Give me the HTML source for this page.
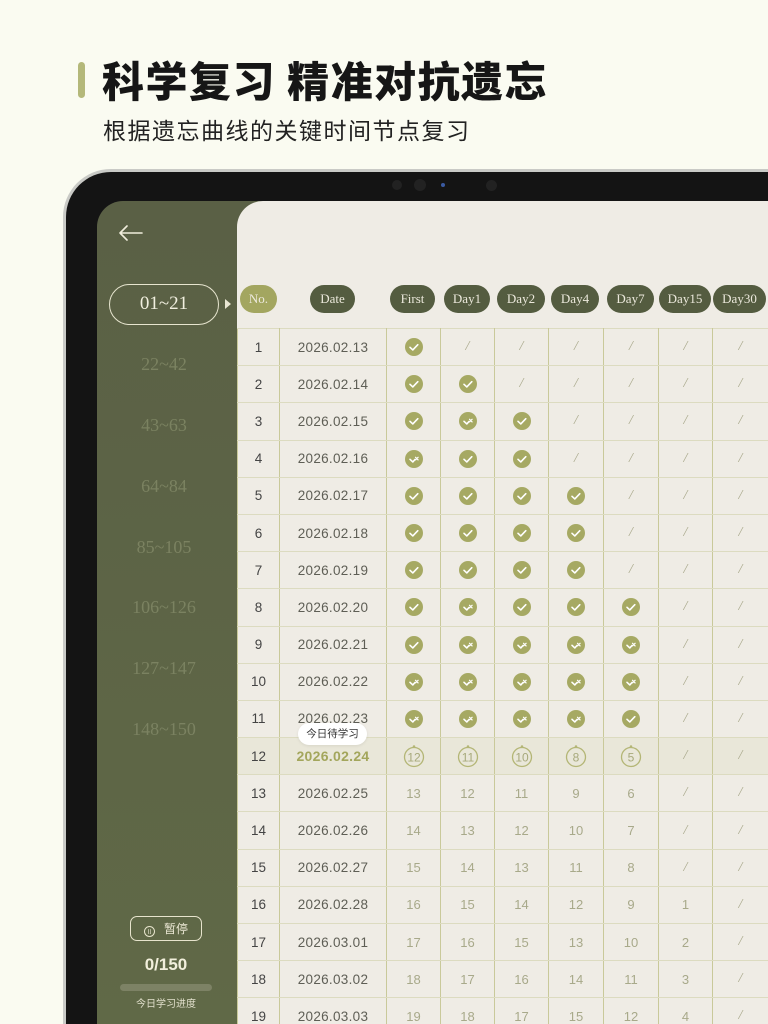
<!DOCTYPE html>
<html><head><meta charset="utf-8">
<style>
*{margin:0;padding:0;box-sizing:border-box}
html,body{width:768px;height:1024px;overflow:hidden}
body{background:#fafbf1;font-family:"Liberation Sans","Noto Sans CJK SC",sans-serif}
#w{position:relative;width:768px;height:1024px;overflow:hidden}
.bar{position:absolute;left:78px;top:62px;width:7px;height:36px;border-radius:4px;background:#b4b87a}
h1{position:absolute;left:102px;top:49px;font-size:42px;font-weight:900;color:#161616;letter-spacing:1.5px;font-family:"Noto Sans CJK SC",sans-serif;white-space:nowrap}
h2{position:absolute;left:103px;top:112px;font-size:23px;font-weight:400;color:#222;letter-spacing:1.5px;font-family:"Noto Sans CJK SC",sans-serif;white-space:nowrap}
.frame{position:absolute;left:63px;top:169px;width:705px;height:855px;border-radius:48px 0 0 0;background:#c9cac6;}
.bezel{position:absolute;left:66px;top:172px;width:702px;height:852px;border-radius:45px 0 0 0;background:#141414}
.cam{position:absolute;top:180px;width:10px;height:10px;border-radius:50%;background:#222}
.screen{position:absolute;left:97px;top:201px;width:671px;height:823px;border-radius:26px 0 0 0;overflow:hidden;background:linear-gradient(#5a6045,#606947)}
.back{position:absolute;left:118px;top:222px}
.pill{position:absolute;left:109px;top:284px;width:110px;height:41px;border:1.5px solid #e7e5cf;border-radius:21px;color:#f1efdf;font-family:"Liberation Serif",serif;font-size:19px;text-align:center;line-height:38px}
.tri{position:absolute;left:225px;top:299px;width:0;height:0;border-top:5px solid transparent;border-bottom:5px solid transparent;border-left:6px solid #e9e6d3}
.rng{position:absolute;left:97px;width:134px;text-align:center;color:#7b8261;font-family:"Liberation Serif",serif;font-size:18px}
.main{position:absolute;left:237px;top:201px;width:531px;height:823px;background:#efece5;border-radius:26px 0 0 0;overflow:hidden}
.hp{position:absolute;top:285px;height:28px;border-radius:14px;background:#545c40;color:#ece9dc;font-family:"Liberation Serif",serif;font-size:13px;line-height:28px;text-align:center}
.tw{position:absolute;left:237px;top:328px;width:531px;height:696px;overflow:hidden}
table{border-collapse:collapse;table-layout:fixed;width:531px}
td{height:37.2px;border-top:1.3px solid #dcdbc0;border-bottom:1.3px solid #dcdbc0;border-left:1.3px solid #c9c99a;border-right:1.3px solid #c9c99a;text-align:center;font-size:13px;color:#8f9070;padding:0}
td.n{color:#444;font-size:13.5px}
td.d{color:#5e5e55;font-size:13.5px;letter-spacing:.3px}
td.s{color:#a9a98c;font-family:"Liberation Serif",serif;font-size:14px;font-style:italic}
td.f{color:#a8a98a}
tr.hl td{background:#e9e7d9}
svg.i{display:block;margin:0 auto}
.tip{position:absolute;left:298px;top:723px;width:69px;height:22px;border-radius:11px;background:#fff;font-size:10.5px;color:#333;text-align:center;line-height:22px;font-family:"Noto Sans CJK SC",sans-serif;box-shadow:0 1px 3px rgba(0,0,0,.08)}
.pause{position:absolute;left:130px;top:916px;width:72px;height:25px;border:1.3px solid #e7e4cd;border-radius:7px;color:#ece9d6;font-size:12px;line-height:23px;text-align:center;font-family:"Noto Sans CJK SC",sans-serif}
.cnt{position:absolute;left:97px;width:138px;top:955px;text-align:center;color:#f2efdc;font-weight:700;font-size:17px}
.prog{position:absolute;left:120px;top:984px;width:92px;height:7px;border-radius:4px;background:#7d8265}
.lbl{position:absolute;left:97px;width:138px;top:995px;text-align:center;color:#e1dfcb;font-size:10px;font-family:"Noto Sans CJK SC",sans-serif}
</style></head><body><div id="w">
<svg width="0" height="0" style="position:absolute">
<defs>
<g id="c"><circle cx="9" cy="9" r="9" fill="#a6a963"/><path d="M5 9.3l2.8 2.6 5-5.2" stroke="#fff" stroke-width="1.6" fill="none" stroke-linecap="round" stroke-linejoin="round"/></g>
<g id="x"><circle cx="9" cy="9" r="9" fill="#a6a963"/><path d="M5 9.3l2.8 2.6 2.2-2.4" stroke="#fff" stroke-width="1.6" fill="none" stroke-linecap="round" stroke-linejoin="round"/><path d="M10.5 7.3l2.6 2.6M13.1 7.3l-2.6 2.6" stroke="#fff" stroke-width="1.2" stroke-linecap="round"/></g>
</defs></svg>
<div class="bar"></div>
<h1>科学复习 精准对抗遗忘</h1>
<h2>根据遗忘曲线的关键时间节点复习</h2>
<div class="frame"></div><div class="bezel"></div>
<div class="cam" style="left:392px"></div><div class="cam" style="left:414px;width:12px;height:12px;top:179px"></div>
<div style="position:absolute;left:441px;top:183px;width:4px;height:4px;border-radius:50%;background:#3a5aa0"></div>
<div class="cam" style="left:486px;width:11px;height:11px"></div>
<div class="screen"></div>
<svg class="back" width="26" height="22" viewBox="0 0 26 22"><path d="M24 11H2M9 4L2 11l7 7" stroke="#f0eddc" stroke-width="1.6" fill="none" stroke-linecap="round" stroke-linejoin="round"/></svg>
<div class="pill">01~21</div><div class="tri"></div>
<div class="rng" style="top:354px">22~42</div>
<div class="rng" style="top:415px">43~63</div>
<div class="rng" style="top:476px">64~84</div>
<div class="rng" style="top:537px">85~105</div>
<div class="rng" style="top:597px">106~126</div>
<div class="rng" style="top:658px">127~147</div>
<div class="rng" style="top:719px">148~150</div>
<div class="pause"><span style="display:inline-block;width:11px;height:11px;border:1px solid #e7e4cd;border-radius:50%;vertical-align:-1px;margin-right:9px;font-size:6px;line-height:9px">ll</span>暂停</div>
<div class="cnt">0/150</div><div class="prog"></div><div class="lbl">今日学习进度</div>
<div class="main"></div>
<div class="hp" style="left:240px;width:37px;background:#a3a660">No.</div>
<div class="hp" style="left:310px;width:45px">Date</div>
<div class="hp" style="left:390px;width:45px">First</div>
<div class="hp" style="left:444px;width:46px">Day1</div>
<div class="hp" style="left:497px;width:48px">Day2</div>
<div class="hp" style="left:551px;width:48px">Day4</div>
<div class="hp" style="left:607px;width:47px">Day7</div>
<div class="hp" style="left:659px;width:52px">Day15</div>
<div class="hp" style="left:713px;width:53px">Day30</div>
<div class="tw"><table>
<colgroup><col style="width:42px"><col style="width:107px"><col style="width:54px"><col style="width:54px"><col style="width:54px"><col style="width:55px"><col style="width:55px"><col style="width:54px"><col style="width:56px"></colgroup>
<tr><td class="n">1</td><td class="d">2026.02.13</td><td><svg class="i" width="18" height="18"><use href="#c"/></svg></td><td class="s">/</td><td class="s">/</td><td class="s">/</td><td class="s">/</td><td class="s">/</td><td class="s">/</td></tr>
<tr><td class="n">2</td><td class="d">2026.02.14</td><td><svg class="i" width="18" height="18"><use href="#c"/></svg></td><td><svg class="i" width="18" height="18"><use href="#c"/></svg></td><td class="s">/</td><td class="s">/</td><td class="s">/</td><td class="s">/</td><td class="s">/</td></tr>
<tr><td class="n">3</td><td class="d">2026.02.15</td><td><svg class="i" width="18" height="18"><use href="#c"/></svg></td><td><svg class="i" width="18" height="18"><use href="#x"/></svg></td><td><svg class="i" width="18" height="18"><use href="#c"/></svg></td><td class="s">/</td><td class="s">/</td><td class="s">/</td><td class="s">/</td></tr>
<tr><td class="n">4</td><td class="d">2026.02.16</td><td><svg class="i" width="18" height="18"><use href="#x"/></svg></td><td><svg class="i" width="18" height="18"><use href="#c"/></svg></td><td><svg class="i" width="18" height="18"><use href="#c"/></svg></td><td class="s">/</td><td class="s">/</td><td class="s">/</td><td class="s">/</td></tr>
<tr><td class="n">5</td><td class="d">2026.02.17</td><td><svg class="i" width="18" height="18"><use href="#c"/></svg></td><td><svg class="i" width="18" height="18"><use href="#c"/></svg></td><td><svg class="i" width="18" height="18"><use href="#c"/></svg></td><td><svg class="i" width="18" height="18"><use href="#c"/></svg></td><td class="s">/</td><td class="s">/</td><td class="s">/</td></tr>
<tr><td class="n">6</td><td class="d">2026.02.18</td><td><svg class="i" width="18" height="18"><use href="#c"/></svg></td><td><svg class="i" width="18" height="18"><use href="#c"/></svg></td><td><svg class="i" width="18" height="18"><use href="#c"/></svg></td><td><svg class="i" width="18" height="18"><use href="#c"/></svg></td><td class="s">/</td><td class="s">/</td><td class="s">/</td></tr>
<tr><td class="n">7</td><td class="d">2026.02.19</td><td><svg class="i" width="18" height="18"><use href="#c"/></svg></td><td><svg class="i" width="18" height="18"><use href="#c"/></svg></td><td><svg class="i" width="18" height="18"><use href="#c"/></svg></td><td><svg class="i" width="18" height="18"><use href="#c"/></svg></td><td class="s">/</td><td class="s">/</td><td class="s">/</td></tr>
<tr><td class="n">8</td><td class="d">2026.02.20</td><td><svg class="i" width="18" height="18"><use href="#c"/></svg></td><td><svg class="i" width="18" height="18"><use href="#x"/></svg></td><td><svg class="i" width="18" height="18"><use href="#c"/></svg></td><td><svg class="i" width="18" height="18"><use href="#c"/></svg></td><td><svg class="i" width="18" height="18"><use href="#c"/></svg></td><td class="s">/</td><td class="s">/</td></tr>
<tr><td class="n">9</td><td class="d">2026.02.21</td><td><svg class="i" width="18" height="18"><use href="#c"/></svg></td><td><svg class="i" width="18" height="18"><use href="#x"/></svg></td><td><svg class="i" width="18" height="18"><use href="#x"/></svg></td><td><svg class="i" width="18" height="18"><use href="#x"/></svg></td><td><svg class="i" width="18" height="18"><use href="#x"/></svg></td><td class="s">/</td><td class="s">/</td></tr>
<tr><td class="n">10</td><td class="d">2026.02.22</td><td><svg class="i" width="18" height="18"><use href="#x"/></svg></td><td><svg class="i" width="18" height="18"><use href="#x"/></svg></td><td><svg class="i" width="18" height="18"><use href="#x"/></svg></td><td><svg class="i" width="18" height="18"><use href="#x"/></svg></td><td><svg class="i" width="18" height="18"><use href="#x"/></svg></td><td class="s">/</td><td class="s">/</td></tr>
<tr><td class="n">11</td><td class="d">2026.02.23</td><td><svg class="i" width="18" height="18"><use href="#x"/></svg></td><td><svg class="i" width="18" height="18"><use href="#x"/></svg></td><td><svg class="i" width="18" height="18"><use href="#x"/></svg></td><td><svg class="i" width="18" height="18"><use href="#x"/></svg></td><td><svg class="i" width="18" height="18"><use href="#c"/></svg></td><td class="s">/</td><td class="s">/</td></tr>
<tr class="hl"><td class="n">12</td><td class="d" style="color:#a3a65c;font-weight:700;font-size:14px">2026.02.24</td>
<td><svg class="i" width="22" height="24"><circle cx="11" cy="13" r="9.5" fill="none" stroke="#b4b676" stroke-width="1.3"/><circle cx="11" cy="2.5" r="1.3" fill="#b4b676"/><text x="11" y="17.5" text-anchor="middle" font-size="12" fill="#a7a97b" font-family="Liberation Sans">12</text></svg></td>
<td><svg class="i" width="22" height="24"><circle cx="11" cy="13" r="9.5" fill="none" stroke="#b4b676" stroke-width="1.3"/><circle cx="11" cy="2.5" r="1.3" fill="#b4b676"/><text x="11" y="17.5" text-anchor="middle" font-size="12" fill="#a7a97b" font-family="Liberation Sans">11</text></svg></td>
<td><svg class="i" width="22" height="24"><circle cx="11" cy="13" r="9.5" fill="none" stroke="#b4b676" stroke-width="1.3"/><circle cx="11" cy="2.5" r="1.3" fill="#b4b676"/><text x="11" y="17.5" text-anchor="middle" font-size="12" fill="#a7a97b" font-family="Liberation Sans">10</text></svg></td>
<td><svg class="i" width="22" height="24"><circle cx="11" cy="13" r="9.5" fill="none" stroke="#b4b676" stroke-width="1.3"/><circle cx="11" cy="2.5" r="1.3" fill="#b4b676"/><text x="11" y="17.5" text-anchor="middle" font-size="12" fill="#a7a97b" font-family="Liberation Sans">8</text></svg></td>
<td><svg class="i" width="22" height="24"><circle cx="11" cy="13" r="9.5" fill="none" stroke="#b4b676" stroke-width="1.3"/><circle cx="11" cy="2.5" r="1.3" fill="#b4b676"/><text x="11" y="17.5" text-anchor="middle" font-size="12" fill="#a7a97b" font-family="Liberation Sans">5</text></svg></td>
<td class="s">/</td><td class="s">/</td></tr>
<tr><td class="n">13</td><td class="d">2026.02.25</td><td class="f">13</td><td class="f">12</td><td class="f">11</td><td class="f">9</td><td class="f">6</td><td class="s">/</td><td class="s">/</td></tr>
<tr><td class="n">14</td><td class="d">2026.02.26</td><td class="f">14</td><td class="f">13</td><td class="f">12</td><td class="f">10</td><td class="f">7</td><td class="s">/</td><td class="s">/</td></tr>
<tr><td class="n">15</td><td class="d">2026.02.27</td><td class="f">15</td><td class="f">14</td><td class="f">13</td><td class="f">11</td><td class="f">8</td><td class="s">/</td><td class="s">/</td></tr>
<tr><td class="n">16</td><td class="d">2026.02.28</td><td class="f">16</td><td class="f">15</td><td class="f">14</td><td class="f">12</td><td class="f">9</td><td class="f">1</td><td class="s">/</td></tr>
<tr><td class="n">17</td><td class="d">2026.03.01</td><td class="f">17</td><td class="f">16</td><td class="f">15</td><td class="f">13</td><td class="f">10</td><td class="f">2</td><td class="s">/</td></tr>
<tr><td class="n">18</td><td class="d">2026.03.02</td><td class="f">18</td><td class="f">17</td><td class="f">16</td><td class="f">14</td><td class="f">11</td><td class="f">3</td><td class="s">/</td></tr>
<tr><td class="n">19</td><td class="d">2026.03.03</td><td class="f">19</td><td class="f">18</td><td class="f">17</td><td class="f">15</td><td class="f">12</td><td class="f">4</td><td class="s">/</td></tr>
</table></div>
<div class="tip">今日待学习</div>
</div></body></html>
